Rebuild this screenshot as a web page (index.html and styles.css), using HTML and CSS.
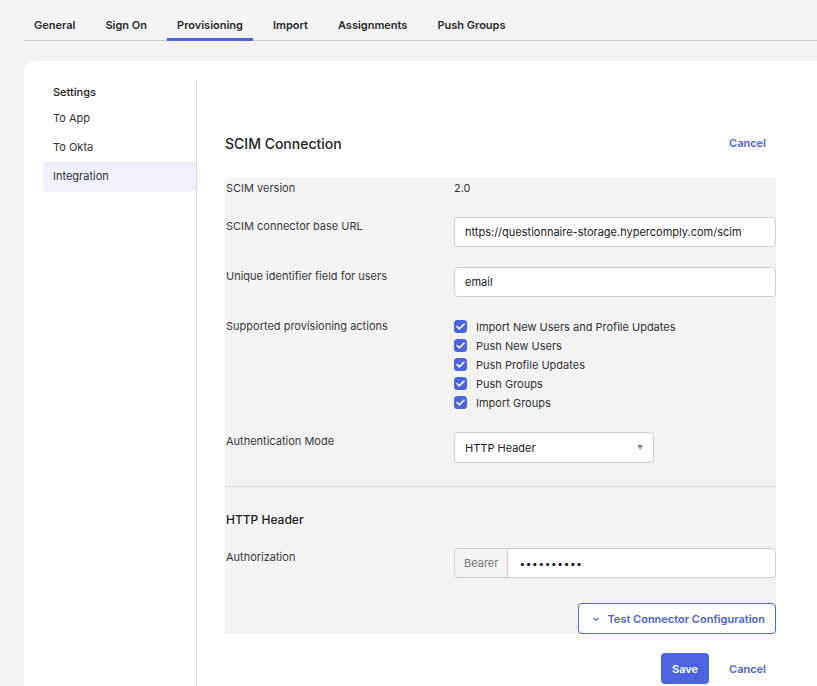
FILE: index.html
```html
<!DOCTYPE html>
<html lang="en">

<head>
    <meta charset="UTF-8">
    <meta name="viewport" content="width=device-width, initial-scale=1.0">
    <title>Provisioning - Integration</title>
    <link rel="stylesheet" href="styles.css">
</head>

<body>
    <nav class="tabs">
        <a class="tab">General</a>
        <a class="tab">Sign On</a>
        <a class="tab active">Provisioning</a>
        <a class="tab">Import</a>
        <a class="tab">Assignments</a>
        <a class="tab">Push Groups</a>
    </nav>

    <div class="card">
        <aside class="sidebar">
            <div class="sidebar-title">Settings</div>
            <a class="side-link">To App</a>
            <a class="side-link">To Okta</a>
            <a class="side-link selected">Integration</a>
        </aside>

        <main class="content">
            <div class="section-head">
                <h2>SCIM Connection</h2>
                <a class="link-btn">Cancel</a>
            </div>

            <div class="panel">
                <div class="row row-static">
                    <div class="label">SCIM version</div>
                    <div class="value">2.0</div>
                </div>
                <div class="row">
                    <div class="label">SCIM connector base URL</div>
                    <div class="value"><div class="input">https://questionnaire-storage.hypercomply.com/scim</div></div>
                </div>
                <div class="row">
                    <div class="label">Unique identifier field for users</div>
                    <div class="value"><div class="input">email</div></div>
                </div>
                <div class="row">
                    <div class="label">Supported provisioning actions</div>
                    <div class="value">
                        <ul class="checks" id="checks"></ul>
                    </div>
                </div>
                <div class="row">
                    <div class="label">Authentication Mode</div>
                    <div class="value">
                        <div class="select">HTTP Header <span class="caret">&#9660;</span></div>
                    </div>
                </div>

                <div class="divider"></div>

                <h3 class="sub-head">HTTP Header</h3>
                <div class="row">
                    <div class="label">Authorization</div>
                    <div class="value">
                        <div class="input-group">
                            <span class="addon">Bearer</span>
                            <span class="secret">&bull;&bull;&bull;&bull;&bull;&bull;&bull;&bull;&bull;&bull;</span>
                        </div>
                    </div>
                </div>

                <div class="test-row">
                    <button class="outline-btn">
                        <svg width="8" height="6" viewBox="0 0 8 6"><path d="M1.5 2 L4 4.5 L6.5 2" fill="none" stroke="#4c64e0" stroke-width="1.2"/></svg>
                        Test Connector Configuration
                    </button>
                </div>
            </div>

            <div class="actions">
                <button class="primary-btn">Save</button>
                <a class="link-btn">Cancel</a>
            </div>
        </main>
    </div>

    <script>
        const actions = [
            'Import New Users and Profile Updates',
            'Push New Users',
            'Push Profile Updates',
            'Push Groups',
            'Import Groups'
        ];
        const list = document.getElementById('checks');
        actions.forEach(name => {
            const li = document.createElement('li');
            li.innerHTML = `
                <span class="box"><svg width="9" height="7" viewBox="0 0 9 7"><path d="M1 3.5 L3.4 5.8 L8 1.2" fill="none" stroke="#fff" stroke-width="1.6" stroke-linecap="round" stroke-linejoin="round"/></svg></span>
                ${name}
            `;
            list.appendChild(li);
        });
    </script>
</body>

</html>
```

FILE: styles.css
```css
body {
    margin: 0;
    background-color: #f3f3f3;
    font-family: Inter, "Noto Sans", Arial, sans-serif;
    color: #2f2f32;
    font-size: 11px;
    overflow: hidden;
}

.tabs {
    display: flex;
    gap: 10px;
    margin-left: 24px;
    height: 41px;
    border-bottom: 1px solid #cfcfcf;
    box-sizing: border-box;
}

.tab {
    display: flex;
    align-items: flex-end;
    padding: 0 10px 6px;
    font-size: 11px;
    font-weight: 600;
    line-height: 14px;
    color: #2b2b2e;
    border-bottom: 3px solid transparent;
    margin-bottom: -1px;
}

.tab.active {
    border-bottom-color: #4c64e0;
}

.card {
    display: flex;
    margin: 20px 0 0 24px;
    background-color: #fff;
    border-radius: 12px 0 0 0;
    min-height: 640px;
}

.sidebar {
    width: 153px;
    padding-left: 19px;
    margin-top: 19px;
    border-right: 1px solid #d8d8d8;
}

.sidebar-title {
    padding: 5px 10px;
    font-size: 11px;
    font-weight: 500;
    line-height: 14px;
    color: #222;
}

.side-link {
    display: block;
    padding: 0 10px;
    line-height: 29px;
    font-size: 11px;
    color: #333;
}

.side-link.selected {
    background-color: #f0f1fb;
}

.content {
    width: 551px;
    padding: 0 0 0 28px;
}

.section-head {
    display: flex;
    justify-content: space-between;
    align-items: center;
    margin-top: 72px;
    height: 20px;
}

.section-head h2 {
    margin: 0;
    font-size: 14px;
    font-weight: 500;
    color: #222;
}

.link-btn {
    padding-right: 10px;
    font-size: 11px;
    font-weight: 600;
    color: #4c64e0;
}

.panel {
    margin-top: 25px;
    background-color: #f3f3f3;
    padding-top: 1px;
}

.row {
    display: flex;
    align-items: flex-start;
    margin-top: 20px;
}

.row-static {
    margin-top: 0;
}

.label {
    width: 228px;
    padding-left: 1px;
    line-height: 18px;
    color: #3a3a3d;
}

.value {
    flex: 1;
    line-height: 18px;
    color: #333;
}

.input {
    height: 28px;
    line-height: 28px;
    padding: 0 10px;
    background-color: #fff;
    border: 1px solid #cfcfcf;
    border-radius: 4px;
    color: #222;
}

.checks {
    list-style: none;
    margin: 0;
    padding: 0;
}

.checks li {
    display: flex;
    align-items: center;
    gap: 9px;
    height: 19px;
    color: #333;
}

.box {
    display: flex;
    align-items: center;
    justify-content: center;
    width: 13px;
    height: 13px;
    border-radius: 3.5px;
    background-color: #4c64e0;
}

.select {
    display: flex;
    justify-content: space-between;
    align-items: center;
    width: 178px;
    height: 29px;
    padding: 0 10px;
    background-color: #fff;
    border: 1px solid #cfcfcf;
    border-radius: 4px;
    color: #222;
}

.caret {
    font-size: 6px;
    color: #888;
}

.divider {
    margin-top: 23px;
    border-top: 1px solid #dcdcdc;
}

.sub-head {
    margin: 24px 0 0 1px;
    font-size: 12px;
    font-weight: 500;
    line-height: 18px;
    color: #222;
}

.sub-head + .row {
    margin-top: 19px;
}

.input-group {
    display: flex;
    height: 28px;
    background-color: #fff;
    border: 1px solid #cfcfcf;
    border-radius: 4px;
}

.addon {
    display: flex;
    align-items: center;
    padding: 0 9px;
    background-color: #f3f3f3;
    border-right: 1px solid #cfcfcf;
    border-radius: 4px 0 0 4px;
    color: #777;
}

.secret {
    display: flex;
    align-items: center;
    padding-left: 11px;
    font-size: 10px;
    letter-spacing: 0.7px;
    color: #111;
}

.test-row {
    display: flex;
    justify-content: flex-end;
    margin-top: 25px;
}

.outline-btn {
    display: flex;
    align-items: center;
    gap: 7px;
    height: 31px;
    padding: 0 10px 0 13px;
    background-color: #fff;
    border: 1px solid #4c64e0;
    border-radius: 4px;
    font-family: inherit;
    font-size: 11px;
    font-weight: 600;
    color: #4c64e0;
}

.actions {
    display: flex;
    justify-content: flex-end;
    align-items: center;
    gap: 20px;
    margin-top: 19px;
}

.primary-btn {
    width: 48px;
    height: 31px;
    border: none;
    border-radius: 4px;
    background-color: #4c64e0;
    font-family: inherit;
    font-size: 11px;
    font-weight: 600;
    color: #fff;
}
```
